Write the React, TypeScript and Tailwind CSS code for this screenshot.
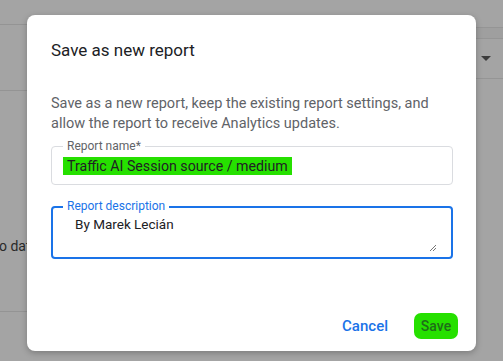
import React from "react";

export default function App() {
  return (
    <div className="relative h-[361px] w-[503px] overflow-hidden bg-[#a4a4a4]" style={{ fontFamily: "Roboto, 'Liberation Sans', sans-serif" }}>
      {/* background page */}
      <div className="grid h-full grid-cols-[250px_1fr]">
        <div className="flex flex-col">
          <div className="h-[24px]" />
          <div className="h-px bg-[#949494]" />
          <div className="h-[65px]" />
          <div className="h-px bg-[#949494]" />
          <div className="h-[145px]" />
          <div className="-ml-[11px] whitespace-nowrap text-[14px] leading-[20px] text-[#2a2a2a]">No data</div>
          <div className="h-[55px]" />
          <div className="h-px bg-[#949494]" />
        </div>
        <div className="flex flex-col">
          <div className="h-[27px]" />
          <div className="h-px bg-[#959595]" />
          <div className="h-[10px] bg-[#9f9f9f]" />
          <div className="h-px bg-[#959595]" />
          <div className="flex h-[39px] items-center justify-end pr-[12px]">
            <svg width="10" height="6" viewBox="0 0 10 6"><path d="M0 0h10L5 5z" fill="#3c3c3c" /></svg>
          </div>
          <div className="h-px bg-[#959595]" />
        </div>
      </div>

      {/* dialog */}
      <div className="absolute left-[27px] top-[15px] flex h-[336px] w-[449px] flex-col rounded-[8px] bg-white px-[24px] shadow-[0_2px_6px_rgba(0,0,0,0.25)]">
        <div className="mt-[23px] text-[17px] leading-[24px] text-[#202124]">Save as new report</div>
        <div className="mt-[32px] text-[14.5px] leading-[20px] text-[#5f6368]">
          Save as a new report, keep the existing report settings, and allow the report to receive Analytics updates.
        </div>
        <div className="relative mt-[12px] h-[39px] w-[402px] rounded-[4px] border border-[#dadce0]">
          <span className="absolute -top-[9px] left-[11px] bg-white px-[4px] text-[12px] leading-[16px] text-[#5f6368]">Report name*</span>
          <div className="flex h-full items-center pl-[11px] pt-[1px]">
            <span className="bg-[#26e000] px-[4px] py-[1px] text-[14.2px] leading-[16px] text-[#202124]">Traffic AI Session source / medium</span>
          </div>
        </div>
        <div className="relative mt-[21px] h-[53px] w-[402px] rounded-[4px] border-2 border-[#1a73e8]">
          <span className="absolute -top-[10px] left-[10px] bg-white px-[4px] text-[12px] leading-[16px] text-[#1a73e8]">Report description</span>
          <div className="pl-[22px] pt-[6px] text-[13.5px] leading-[20px] text-[#202124]">By Marek Lecián</div>
          <svg className="absolute bottom-[5px] right-[14px]" width="8" height="8" viewBox="0 0 8 8">
            <path d="M7 1L1 7M7 4L4 7" stroke="#777" strokeWidth="1" />
          </svg>
        </div>
        <div className="mt-auto mb-[12px] flex items-center justify-end gap-[26px] pr-[-6px] -mr-[6px]">
          <span className="text-[15px] font-medium leading-[20px] text-[#1a73e8]">Cancel</span>
          <span className="flex h-[26px] w-[44px] items-center justify-center rounded-[7px] bg-[#26e000] text-[14px] font-medium text-[#1e6e18]">Save</span>
        </div>
      </div>
    </div>
  );
}
